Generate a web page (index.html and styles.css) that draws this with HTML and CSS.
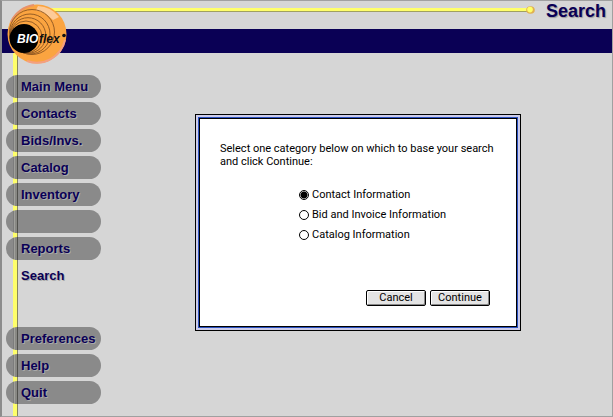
FILE: index.html
```html
<!DOCTYPE html>
<html lang="en">
<head>
    <meta charset="UTF-8">
    <meta name="viewport" content="width=device-width, initial-scale=1.0">
    <title>BIOflex - Search</title>
    <link rel="stylesheet" href="styles.css">
</head>
<body>
    <header>
        <div class="title-row">
            <div class="rule"></div>
            <svg class="knob" width="9" height="8" viewBox="0 0 9 8">
                <ellipse cx="4.5" cy="4" rx="4.3" ry="3.8" fill="#e0b050"/>
                <circle cx="4" cy="3.6" r="2.8" fill="#ffff6a"/>
            </svg>
            <h1>Search</h1>
        </div>
        <div class="band"></div>
        <svg class="logo" width="60" height="60" viewBox="0 0 60 60" role="img" aria-label="BIOflex">
            <circle cx="30" cy="30" r="29.5" fill="#fba440"/>
            <path d="M31 2A28 28 0 0 1 52 13L46 16Q38 8 29 6Z" fill="#fdcb98"/>
            <path d="M4 18A29 29 0 0 1 27 1" fill="none" stroke="#e8926a" stroke-width="2"/>
            <path d="M58 36A29 29 0 0 1 20 57" fill="none" stroke="#f4a080" stroke-width="2"/>
            <g fill="none" stroke="#8a5420" stroke-width="0.9">
                <circle cx="25" cy="28" r="22.5"/>
                <circle cx="23" cy="30" r="20"/>
                <circle cx="21" cy="31.5" r="17.8"/>
                <circle cx="19" cy="33" r="16"/>
            </g>
            <circle cx="17" cy="34.5" r="14.5" fill="#000"/>
            <text class="logo-bio" x="10" y="39">BIO</text>
            <text class="logo-flex" x="32" y="39">flex</text>
            <circle cx="57" cy="31.5" r="1.8" fill="#111"/>
        </svg>
    </header>

    <div class="content">
        <nav class="menu">
            <a href="#">Main Menu</a>
            <a href="#">Contacts</a>
            <a href="#">Bids/Invs.</a>
            <a href="#">Catalog</a>
            <a href="#">Inventory</a>
            <span class="blank"></span>
            <a href="#">Reports</a>
            <a href="#" class="active">Search</a>
            <div class="menu-bottom">
                <a href="#">Preferences</a>
                <a href="#">Help</a>
                <a href="#">Quit</a>
            </div>
        </nav>

        <main>
            <form class="dialog">
                <p>Select one category below on which to base your search and click Continue:</p>
                <div class="options">
                    <label><input type="radio" name="category" checked>Contact Information</label>
                    <label><input type="radio" name="category">Bid and Invoice Information</label>
                    <label><input type="radio" name="category">Catalog Information</label>
                </div>
                <div class="buttons">
                    <button type="button">Cancel</button>
                    <button type="button">Continue</button>
                </div>
            </form>
        </main>
    </div>
</body>
</html>
```

FILE: styles.css
```css
* {
    box-sizing: border-box;
}
body {
    margin: 0;
    min-height: 100vh;
    display: flex;
    flex-direction: column;
    background: #d6d6d6;
    border: 1px solid #a0a0a0;
    border-left: 2px solid #8c8c8c;
    font-family: "Liberation Sans", Arial, sans-serif;
}
header {
    position: relative;
}
.title-row {
    display: flex;
    height: 28px;
    padding: 0 6px 0 48px;
}
.rule {
    flex: 1;
    height: 4px;
    margin-top: 7px;
    background: #ffff6a;
    border-bottom: 1px solid #a0a060;
}
.knob {
    margin: 5px 11px 0 -1px;
}
h1 {
    margin: 0;
    font-size: 18px;
    line-height: 20px;
    color: #0a0055;
    text-shadow: 1px 1px 1px #999;
}
.band {
    height: 24px;
    background: #0a0055;
}
.logo {
    position: absolute;
    left: 5px;
    top: 3px;
}
.logo text {
    font-size: 12px;
    font-weight: bold;
    font-style: italic;
}
.logo-bio {
    fill: #fff;
}
.logo-flex {
    fill: #111;
}
.content {
    flex: 1;
    display: flex;
}
/* yellow pole running down behind the buttons */
.menu {
    width: 99px;
    padding: 22px 0 12px 4px;
    display: flex;
    flex-direction: column;
    gap: 4px;
    background: linear-gradient(to right, #ffff6a 4px, #88885c 4px) 11px 0 / 5px 100% no-repeat;
}
.menu a,
.blank {
    display: block;
    height: 23px;
    padding-left: 15px;
    border-radius: 12px;
    background: linear-gradient(to right, #7c7c7c 1px, #a0a09c 1px, #a0a09c 2px, #888884 2px, #888884 4px, #50504c 4px) 7px 0 / 5px 100% no-repeat #8a8a8a;
    color: #0a0055;
    font-size: 13px;
    font-weight: bold;
    line-height: 23px;
    text-decoration: none;
    text-shadow: 1px 1px 0 #aaa;
}
.menu a.active {
    background: none;
}
.menu-bottom {
    display: flex;
    flex-direction: column;
    gap: 4px;
    margin-top: 36px;
}
main {
    flex: 1;
    padding: 61px 91px 0 94px;
}
.dialog {
    padding: 23px 12px 20px 20px;
    background: #fff;
    border: 1px solid #000;
    margin: 4px;
    box-shadow: 0 0 0 1px #2a50c0, 0 0 0 3px #ccccea, 0 0 0 4px #000;
    font-family: Roboto, sans-serif;
    font-size: 11px;
    color: #000;
}
.dialog p {
    margin: 0;
    line-height: 13px;
}
.options {
    display: flex;
    flex-direction: column;
    gap: 4px;
    margin: 19px 0 0 79px;
}
.options label {
    display: flex;
    align-items: center;
    gap: 3px;
    line-height: 16px;
}
.options input {
    appearance: none;
    width: 10px;
    height: 10px;
    margin: 0;
    border: 1px solid #000;
    border-radius: 50%;
    background: #fff;
}
.options input:checked {
    background: radial-gradient(circle, #000 3px, #fff 4px);
}
.buttons {
    display: flex;
    justify-content: flex-end;
    gap: 4px;
    margin-top: 47px;
    padding-right: 14px;
}
.buttons button {
    width: 60px;
    height: 16px;
    padding: 0;
    border: 1px solid #000;
    border-radius: 2px;
    background: #e4e4e4;
    box-shadow: inset 1px 1px 0 #fff, inset -1px -1px 0 #888;
    font-family: Roboto, sans-serif;
    font-size: 11px;
    line-height: 12px;
    color: #000;
}
```
